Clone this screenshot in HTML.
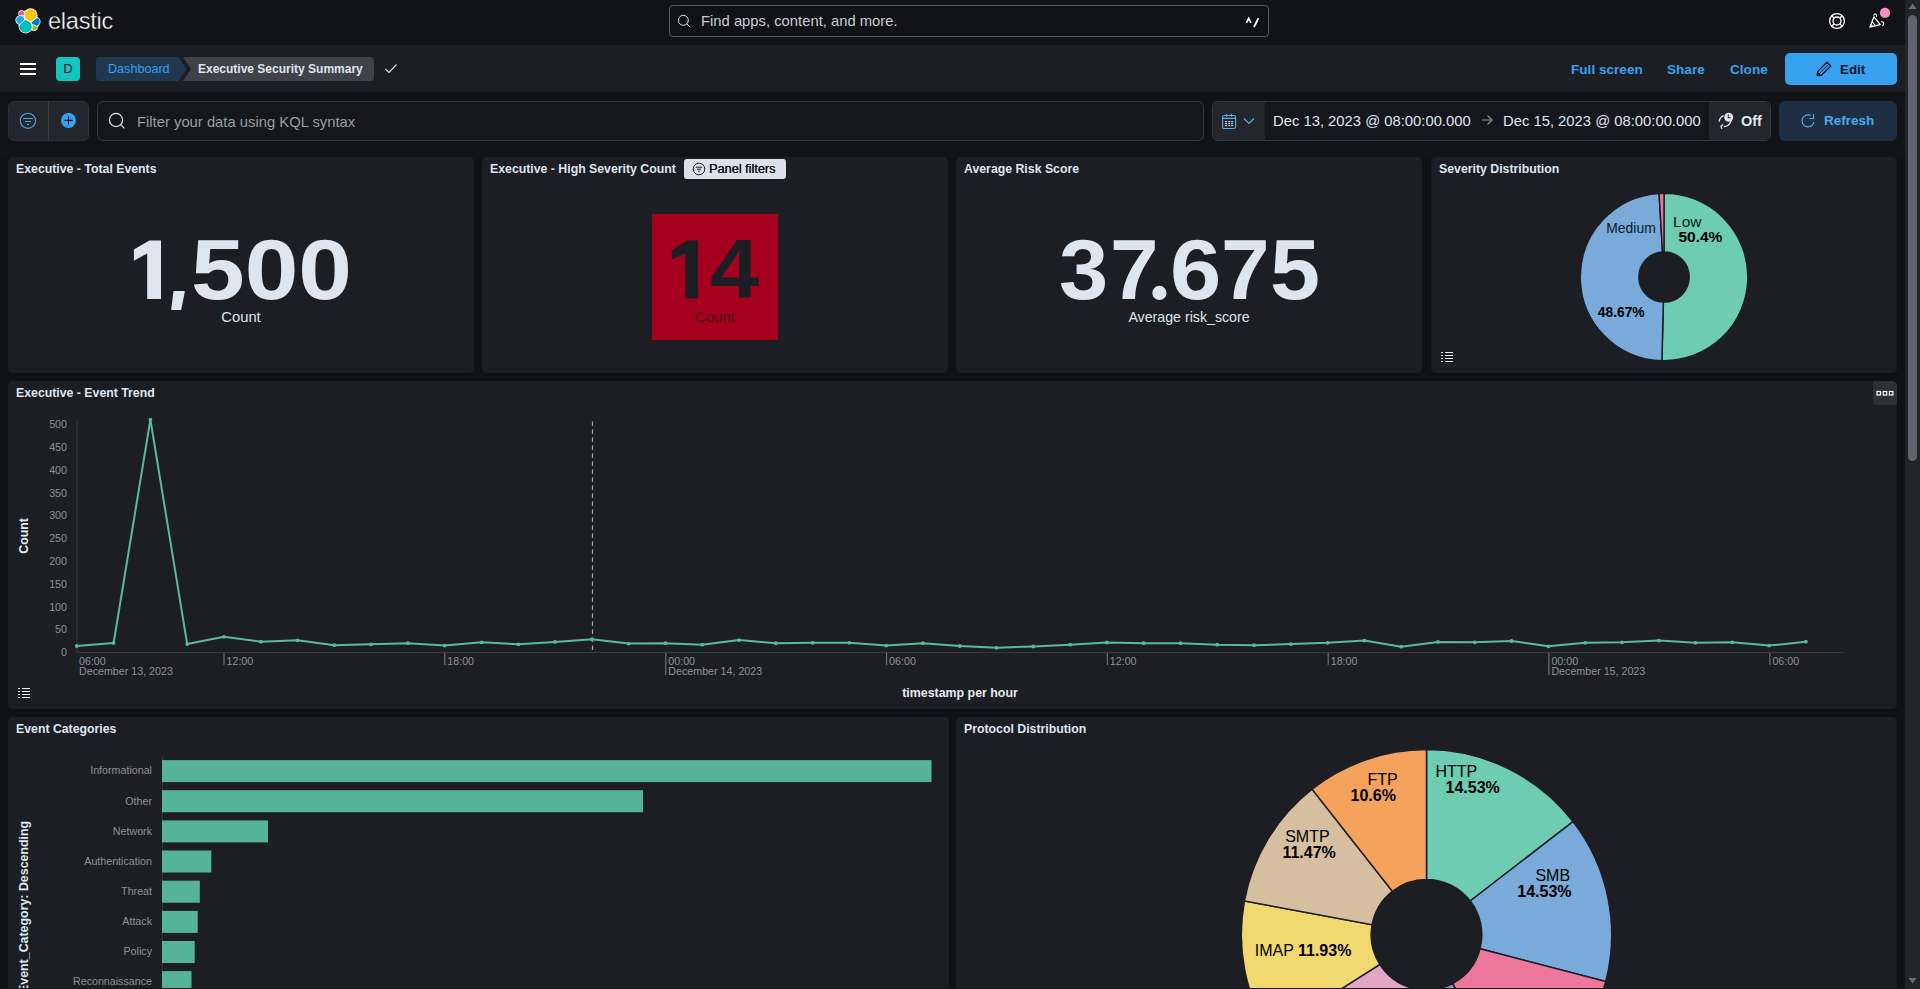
<!DOCTYPE html>
<html><head><meta charset="utf-8">
<style>
*{box-sizing:border-box;margin:0;padding:0}
html,body{width:1920px;height:989px;overflow:hidden;background:#101114;font-family:"Liberation Sans",sans-serif;color:#dfe5ef}
.abs{position:absolute;white-space:nowrap}
.t{position:absolute;white-space:nowrap;line-height:1}
.panel{position:absolute;background:#1d1e24;border-radius:5px}
.ttl{position:absolute;white-space:nowrap;line-height:1;font-size:12.3px;font-weight:bold;color:#dfe5ef}
</style></head><body>
<!-- ===== HEADER ===== -->
<div class="abs" style="left:0;top:0;width:1905px;height:45px;background:#121317"></div>
<svg class="abs" style="left:0;top:0" width="46" height="40" viewBox="0 0 46 40">
<defs>
<clipPath id="cy"><polygon points="24.3,4 44,4 44,12.5 31,22.3 24.4,18.4 24.3,16"/></clipPath>
<clipPath id="cp"><polygon points="10,4 24.3,4 24.3,15.6 10,15.6"/></clipPath>
<clipPath id="cl"><polygon points="10,15.6 24.3,15.6 24.4,18.4 24.9,19.6 18.6,26 10,26"/></clipPath>
<clipPath id="ct"><polygon points="18.6,26 24.9,19.6 24.4,18.4 31,22.3 32.2,24.4 32.2,36 12,36"/></clipPath>
<clipPath id="cb"><polygon points="31,22.3 44,12.5 44,28.4 32.2,24.6"/></clipPath>
<clipPath id="cg"><polygon points="32.2,24.6 44,28.4 44,36 32.2,36"/></clipPath>
</defs>
<g fill="#fff">
<circle cx="30.6" cy="15.2" r="6.9"/><circle cx="21.6" cy="13.6" r="3.3"/><circle cx="20.3" cy="20.1" r="4.9"/>
<circle cx="25.6" cy="26.4" r="7"/><circle cx="35.3" cy="21.7" r="5.2"/><circle cx="34.3" cy="27.5" r="3.4"/>
</g>
<circle cx="30.6" cy="15.2" r="6.2" fill="#fec514" clip-path="url(#cy)"/>
<circle cx="21.6" cy="13.6" r="2.6" fill="#f04e98" clip-path="url(#cp)"/>
<circle cx="20.3" cy="20.1" r="4.2" fill="#1ba9f5" clip-path="url(#cl)"/>
<circle cx="25.6" cy="26.4" r="6.3" fill="#00bfb3" clip-path="url(#ct)"/>
<circle cx="35.3" cy="21.7" r="4.5" fill="#0077cc" clip-path="url(#cb)"/>
<circle cx="34.4" cy="27.6" r="2.8" fill="#93c90e" clip-path="url(#cg)"/>
<path d="M24.3,10.5 V16 L24.4,18.4 L31,22.3 L38,17 M24.9,19.6 L18.6,26 M31,22.3 L32.2,24.4 V31 M32.2,24.6 L38.5,26.6 M19,15.6 H24.3" fill="none" stroke="#fff" stroke-width="0.7"/>
</svg>
<svg class="abs" style="left:40px;top:0" width="90" height="40" viewBox="40 0 90 40"><text x="48" y="29.4" font-family="Liberation Sans" font-size="23.6" letter-spacing="-0.25" fill="#ffffff" stroke="#121317" stroke-width="0.4">elastic</text></svg>
<div class="abs" style="left:669px;top:5px;width:600px;height:32px;border:1px solid #58595f;border-radius:4px;background:#111215"></div>
<svg class="abs" style="left:677px;top:14px" width="16" height="16" viewBox="0 0 16 16"><circle cx="6.3" cy="6.3" r="5" fill="none" stroke="#dfe5ef" stroke-width="1"/><path d="M9.8 9.8 L12.8 12.8" stroke="#dfe5ef" stroke-width="1"/></svg>
<div class="t" style="left:701px;top:14px;font-size:14.8px;color:#c8ccd3">Find apps, content, and more.</div>
<svg class="abs" style="left:1240px;top:10px" width="24" height="24" viewBox="0 0 24 24"><path d="M6.4 12.8 L8.7 8.4 L11 12.8" fill="none" stroke="#fff" stroke-width="1.7"/><path d="M14 17.2 L18.4 8.2" fill="none" stroke="#fff" stroke-width="1.9"/></svg>
<svg class="abs" style="left:1828px;top:12px" width="18" height="18" viewBox="0 0 18 18"><circle cx="9" cy="9" r="7.4" fill="none" stroke="#fff" stroke-width="1.3"/><circle cx="9" cy="9" r="4" fill="none" stroke="#fff" stroke-width="1.3"/><path d="M3.8 3.8L6.2 6.2M14.2 3.8L11.8 6.2M3.8 14.2L6.2 11.8M14.2 14.2L11.8 11.8" stroke="#fff" stroke-width="1.3"/></svg>
<svg class="abs" style="left:1860px;top:5px" width="32" height="28" viewBox="0 0 32 28"><path d="M9.8 22.2 L14 11.8 L20.2 19.6 Z" fill="none" stroke="#fff" stroke-width="1.25" stroke-linejoin="round"/><path d="M12.2 16.6 L15.4 20.7 M11 19.4 L12.6 21.4" stroke="#fff" stroke-width="1.1"/><path d="M13.6 10.6 Q14.3 8.3 16 9.2 Q17.2 10 16.3 11.8" fill="none" stroke="#fff" stroke-width="1.1"/><path d="M21 16.8 Q23.3 16.3 23.7 18.3 Q24 20.2 22.3 20.6" fill="none" stroke="#fff" stroke-width="1.1"/><circle cx="25" cy="7.9" r="5.1" fill="#f490bd"/></svg>
<!-- ===== NAV ===== -->
<div class="abs" style="left:0;top:45px;width:1905px;height:47px;background:#1d1e24"></div>
<div class="abs" style="left:20px;top:63px;width:16px;height:2px;background:#fff"></div>
<div class="abs" style="left:20px;top:68px;width:16px;height:2px;background:#fff"></div>
<div class="abs" style="left:20px;top:73px;width:16px;height:2px;background:#fff"></div>
<div class="abs" style="left:56px;top:57px;width:24px;height:24px;border-radius:4px;background:#16c5c0;color:#0b1628;font-size:13px;text-align:center;line-height:24px">D</div>
<svg class="abs" style="left:96px;top:57px" width="280" height="24" viewBox="0 0 280 24">
  <path d="M4 0 H82.5 L90.5 12 L82.5 24 H4 Q0 24 0 20 V4 Q0 0 4 0 Z" fill="#20374f"/>
  <path d="M87 0 H274 Q278 0 278 4 V20 Q278 24 274 24 H87 L95 12 Z" fill="#404249"/>
</svg>
<div class="t" style="left:108px;top:63px;font-size:12.6px;color:#36a2ef">Dashboard</div>
<div class="t" style="left:198px;top:63px;font-size:12px;font-weight:bold;color:#dfe5ef">Executive Security Summary</div>
<svg class="abs" style="left:384px;top:63px" width="14" height="12" viewBox="0 0 14 12"><path d="M1.5 6 L5 9.5 L12.5 1.5" fill="none" stroke="#dfe5ef" stroke-width="1.1"/></svg>
<div class="t" style="left:1571px;top:63px;font-size:13.6px;font-weight:bold;color:#36a2ef">Full screen</div>
<div class="t" style="left:1667px;top:63px;font-size:13.6px;font-weight:bold;color:#36a2ef">Share</div>
<div class="t" style="left:1730px;top:63px;font-size:13.6px;font-weight:bold;color:#36a2ef">Clone</div>
<div class="abs" style="left:1785px;top:53px;width:112px;height:32px;border-radius:5px;background:#36a2ef"></div>
<svg class="abs" style="left:1816px;top:61px" width="16" height="16" viewBox="0 0 16 16"><path d="M10.9 1.3 L14.8 5 L5.3 14.4 L1.3 14.7 L1.6 10.6 Z" fill="none" stroke="#0b1628" stroke-width="1.3" stroke-linejoin="round"/><path d="M12.8 3.2 L3.4 12.6" stroke="#0b1628" stroke-width="0.9"/><path d="M1.6 10.6 L5.3 14.4 L1.3 14.7 Z" fill="#0b1628" stroke="#0b1628" stroke-width="0.8" stroke-linejoin="round"/></svg>
<div class="t" style="left:1840px;top:63px;font-size:13.4px;font-weight:bold;color:#0b1628">Edit</div>
<!-- ===== FILTER BAR ===== -->
<div class="abs" style="left:0;top:92px;width:1905px;height:65px;background:#121317"></div>
<div class="abs" style="left:8px;top:101px;width:81px;height:40px;border-radius:6px;background:#25262d;border:1px solid #2f3038"></div>
<div class="abs" style="left:48px;top:101px;width:1px;height:40px;background:#3a3c45"></div>
<svg class="abs" style="left:19px;top:112px" width="18" height="18" viewBox="0 0 18 18"><circle cx="8.9" cy="8.8" r="7.6" fill="none" stroke="#4fa6e0" stroke-width="1.1"/><path d="M4.3 6.5 H13.9 M6 9.5 H12 M8.1 12.4 H9.8" stroke="#4fa6e0" stroke-width="1.1"/></svg>
<svg class="abs" style="left:60px;top:113px" width="17" height="16" viewBox="0 0 17 16"><circle cx="8.5" cy="7.4" r="7.5" fill="#36a2ef"/><path d="M8.5 3.2 V11.6 M4.3 7.4 H12.7" stroke="#0b1628" stroke-width="1.1"/></svg>
<div class="abs" style="left:97px;top:101px;width:1107px;height:40px;border-radius:6px;background:#16171c;border:1px solid #363841"></div>
<svg class="abs" style="left:108px;top:112px" width="18" height="18" viewBox="0 0 18 18"><circle cx="8" cy="8" r="6.6" fill="none" stroke="#dfe5ef" stroke-width="1.2"/><path d="M12.7 12.7 L16.3 16.3" stroke="#dfe5ef" stroke-width="1.2"/></svg>
<div class="t" style="left:137px;top:115px;font-size:14.8px;color:#9a9ea5">Filter your data using KQL syntax</div>
<div class="abs" style="left:1212px;top:101px;width:559px;height:40px;border-radius:6px;background:#16171c;border:1px solid #363841;overflow:hidden">
  <div class="abs" style="left:0;top:0;width:52px;height:40px;background:#25262d"></div>
  <div class="abs" style="left:496px;top:0;width:63px;height:40px;background:#25262d"></div>
</div>
<svg class="abs" style="left:1215px;top:108px" width="28" height="26" viewBox="0 0 28 26"><rect x="7.6" y="7.5" width="13" height="13" rx="1.6" fill="none" stroke="#5aaee8" stroke-width="1.1"/><path d="M7.6 10.4 H20.6 M11.4 6 V8.8 M16.4 6 V8.8" stroke="#5aaee8" stroke-width="1.1"/><rect x="10.0" y="13.0" width="2.1" height="1.2" fill="#aebfd6"/><rect x="13.1" y="13.0" width="2.1" height="1.2" fill="#aebfd6"/><rect x="16.1" y="13.0" width="2.1" height="1.2" fill="#aebfd6"/><rect x="10.0" y="15.0" width="2.1" height="1.2" fill="#aebfd6"/><rect x="13.1" y="15.0" width="2.1" height="1.2" fill="#aebfd6"/><rect x="16.1" y="15.0" width="2.1" height="1.2" fill="#aebfd6"/><rect x="10.0" y="17.0" width="2.1" height="1.2" fill="#aebfd6"/><rect x="13.1" y="17.0" width="2.1" height="1.2" fill="#aebfd6"/><rect x="16.1" y="17.0" width="2.1" height="1.2" fill="#aebfd6"/></svg>
<svg class="abs" style="left:1243px;top:117px" width="12" height="8" viewBox="0 0 12 8"><path d="M1 1.5 L6 6.5 L11 1.5" fill="none" stroke="#5aaee8" stroke-width="1.15"/></svg>
<div class="t" style="left:1273px;top:114px;font-size:14.8px;color:#dfe5ef">Dec 13, 2023 @ 08:00:00.000</div>
<svg class="abs" style="left:1481px;top:114px" width="12" height="12" viewBox="0 0 12 12"><path d="M1 6 H11 M6.5 1.5 L11 6 L6.5 10.5" fill="none" stroke="#8e9299" stroke-width="1.1"/></svg>
<div class="t" style="left:1503px;top:114px;font-size:14.8px;color:#dfe5ef">Dec 15, 2023 @ 08:00:00.000</div>
<svg class="abs" style="left:1710px;top:105px" width="30" height="33" viewBox="0 0 30 33"><path d="M9.2 16.8 Q9.4 12.6 13.6 10.6" fill="none" stroke="#dfe5ef" stroke-width="1.3"/><path d="M21 15.8 Q19.6 21.2 13.8 21.7" fill="none" stroke="#dfe5ef" stroke-width="1.3"/><path d="M13.2 19.6 L10.9 21.3 L11.8 23.8" fill="none" stroke="#dfe5ef" stroke-width="1.3"/><circle cx="18.7" cy="12.3" r="4.5" fill="#dfe5ef"/><path d="M18.3 9.6 V12.6 H20.6" fill="none" stroke="#25262d" stroke-width="1.1"/></svg>
<div class="t" style="left:1741px;top:114px;font-size:14.5px;font-weight:bold;color:#dfe5ef">Off</div>
<div class="abs" style="left:1779px;top:101px;width:118px;height:40px;border-radius:6px;background:#1e2f44"></div>
<svg class="abs" style="left:1795px;top:108px" width="26" height="26" viewBox="0 0 26 26"><path d="M18.9 14 A6 6 0 1 1 15.6 7.5" fill="none" stroke="#5aaee8" stroke-width="1.1"/><path d="M18.6 5.9 V10.5 H14.3" fill="none" stroke="#5aaee8" stroke-width="1.1"/></svg>
<div class="t" style="left:1824px;top:114px;font-size:13.5px;font-weight:bold;color:#4aa8ec">Refresh</div>
<!-- ===== ROW 1 ===== -->
<div class="panel" style="left:8px;top:157px;width:466px;height:216px"></div>
<div class="ttl" style="left:16px;top:163px">Executive - Total Events</div>
<svg class="abs" style="left:0;top:0" width="480" height="340" viewBox="0 0 480 340"><polygon points="149.3,240.5 161,240.5 161,299 147.2,299 147.2,253.4 133.9,260.7 133.9,249.4" fill="#dfe5ef"/><polygon points="173.5,291 184.9,291 181.2,310 171.1,310" fill="#dfe5ef"/></svg>
<div class="t" style="left:191px;top:226px;font-size:86px;font-weight:bold;color:#dfe5ef;transform:scaleX(1.122);transform-origin:0 0">500</div>
<div class="t" style="left:8px;width:466px;text-align:center;top:309.5px;font-size:14.8px;color:#dfe5ef">Count</div>

<div class="panel" style="left:482px;top:157px;width:466px;height:216px"></div>
<div class="ttl" style="left:490px;top:163px">Executive - High Severity Count</div>
<div class="abs" style="left:684px;top:159px;width:102px;height:20px;border-radius:3px;background:#dce1e9"></div>
<svg class="abs" style="left:692px;top:162px" width="14" height="14" viewBox="0 0 14 14"><circle cx="7" cy="7" r="5.8" fill="none" stroke="#1d1e24" stroke-width="1"/><path d="M3.8 5.2 H10.2 M5 7.2 H9 M6.2 9.2 H7.8" stroke="#1d1e24" stroke-width="1"/></svg>
<div class="t" style="left:709px;top:162.5px;font-size:12.7px;color:#111;text-shadow:0.35px 0 0 #111">Panel filters</div>
<div class="abs" style="left:652px;top:214px;width:126px;height:126px;background:#a6001f"></div>
<svg class="abs" style="left:650px;top:230px" width="60" height="80" viewBox="650 230 60 80"><polygon points="686.7,240.4 698,240.4 698,298.4 685.3,298.4 685.3,253.8 671.8,259.5 671.8,250.3" fill="#1d1e24"/></svg>
<div class="t" style="left:709.6px;top:227.4px;font-size:84px;font-weight:bold;color:#1d1e24;transform:scaleX(1.053);transform-origin:0 0">4</div>
<div class="t" style="left:652px;width:126px;text-align:center;top:309.5px;font-size:14.8px;color:#4a0c18">Count</div>

<div class="panel" style="left:956px;top:157px;width:466px;height:216px"></div>
<div class="ttl" style="left:964px;top:163px">Average Risk Score</div>
<div class="t" style="left:1059.0px;top:226.8px;font-size:85px;font-weight:bold;color:#dfe5ef;transform:scaleX(1.04);transform-origin:0 0">3</div>
<div class="t" style="left:1109.6px;top:226.8px;font-size:85px;font-weight:bold;color:#dfe5ef;transform:scaleX(1.027);transform-origin:0 0">7</div>
<div class="t" style="left:1169.5px;top:226.8px;font-size:85px;font-weight:bold;color:#dfe5ef;transform:scaleX(1.085);transform-origin:0 0">6</div>
<div class="t" style="left:1221.3px;top:226.8px;font-size:85px;font-weight:bold;color:#dfe5ef;transform:scaleX(1.029);transform-origin:0 0">7</div>
<div class="t" style="left:1269.6px;top:226.8px;font-size:85px;font-weight:bold;color:#dfe5ef;transform:scaleX(1.06);transform-origin:0 0">5</div>
<svg class="abs" style="left:1150px;top:284px" width="20" height="18" viewBox="1150 284 20 18"><circle cx="1159.4" cy="292.9" r="7.1" fill="#dfe5ef"/></svg>

<div class="t" style="left:956px;width:466px;text-align:center;top:310px;font-size:14.2px;color:#dfe5ef">Average risk_score</div>

<div class="panel" style="left:1431px;top:157px;width:466px;height:216px"></div>
<div class="ttl" style="left:1439px;top:163px">Severity Distribution</div>
<svg class="abs" style="left:1440px;top:350px" width="14" height="14" viewBox="0 0 14 14"><path d="M1 2.5h2M1 5.5h2M1 8.5h2M1 11.5h2M5 2.5h8M5 5.5h8M5 8.5h8M5 11.5h8" stroke="#eef0f4" stroke-width="1.15"/></svg>
<!-- ===== ROW 2 ===== -->
<div class="panel" style="left:8px;top:381px;width:1889px;height:328px"></div>
<div class="ttl" style="left:16px;top:387px">Executive - Event Trend</div>
<div class="abs" style="left:1873px;top:381px;width:24px;height:24px;border-radius:2px 5px 2px 4px;background:#2f3036"></div>
<svg class="abs" style="left:1876px;top:389.5px" width="18" height="8" viewBox="0 0 18 8"><rect x="1" y="1.5" width="3.5" height="3.5" fill="none" stroke="#fff" stroke-width="1.2"/><rect x="7.2" y="1.5" width="3.5" height="3.5" fill="none" stroke="#fff" stroke-width="1.2"/><rect x="13.4" y="1.5" width="3.5" height="3.5" fill="none" stroke="#fff" stroke-width="1.2"/></svg>
<svg class="abs" style="left:0;top:0" width="1905" height="989" viewBox="0 0 1905 989" font-family="Liberation Sans">
<path d="M77,420 V652.5 H1844" fill="none" stroke="#343741" stroke-width="1"/>
<path d="M592.5,421.5 V653" fill="none" stroke="#a3a9b3" stroke-width="1.2" stroke-dasharray="4.5,3.5"/>
<polyline points="76.8,646.0 113.6,643.0 150.4,419.7 187.2,644.1 224.0,636.8 260.8,641.7 297.5,640.3 334.3,645.2 371.1,644.3 407.9,643.2 444.7,645.6 481.5,642.3 518.3,644.3 555.1,641.9 591.9,639.3 628.6,643.6 665.4,643.2 702.2,644.7 739.0,640.1 775.8,643.2 812.6,642.8 849.4,642.8 886.2,645.6 923.0,643.2 959.8,646.0 996.5,647.8 1033.3,646.5 1070.1,644.7 1106.9,642.5 1143.7,643.2 1180.5,643.2 1217.3,644.7 1254.1,645.2 1290.9,644.1 1327.7,642.8 1364.4,640.6 1401.2,646.7 1438.0,641.9 1474.8,642.3 1511.6,641.0 1548.4,646.3 1585.2,642.8 1622.0,642.3 1658.8,640.6 1695.6,642.8 1732.3,642.3 1769.1,645.6 1805.9,641.7" fill="none" stroke="#5aba9c" stroke-width="2" stroke-linejoin="round"/>
<circle cx="76.8" cy="646.0" r="1.9" fill="#5aba9c"/>
<circle cx="113.6" cy="643.0" r="1.9" fill="#5aba9c"/>
<circle cx="150.4" cy="419.7" r="1.9" fill="#5aba9c"/>
<circle cx="187.2" cy="644.1" r="1.9" fill="#5aba9c"/>
<circle cx="224.0" cy="636.8" r="1.9" fill="#5aba9c"/>
<circle cx="260.8" cy="641.7" r="1.9" fill="#5aba9c"/>
<circle cx="297.5" cy="640.3" r="1.9" fill="#5aba9c"/>
<circle cx="334.3" cy="645.2" r="1.9" fill="#5aba9c"/>
<circle cx="371.1" cy="644.3" r="1.9" fill="#5aba9c"/>
<circle cx="407.9" cy="643.2" r="1.9" fill="#5aba9c"/>
<circle cx="444.7" cy="645.6" r="1.9" fill="#5aba9c"/>
<circle cx="481.5" cy="642.3" r="1.9" fill="#5aba9c"/>
<circle cx="518.3" cy="644.3" r="1.9" fill="#5aba9c"/>
<circle cx="555.1" cy="641.9" r="1.9" fill="#5aba9c"/>
<circle cx="591.9" cy="639.3" r="1.9" fill="#5aba9c"/>
<circle cx="628.6" cy="643.6" r="1.9" fill="#5aba9c"/>
<circle cx="665.4" cy="643.2" r="1.9" fill="#5aba9c"/>
<circle cx="702.2" cy="644.7" r="1.9" fill="#5aba9c"/>
<circle cx="739.0" cy="640.1" r="1.9" fill="#5aba9c"/>
<circle cx="775.8" cy="643.2" r="1.9" fill="#5aba9c"/>
<circle cx="812.6" cy="642.8" r="1.9" fill="#5aba9c"/>
<circle cx="849.4" cy="642.8" r="1.9" fill="#5aba9c"/>
<circle cx="886.2" cy="645.6" r="1.9" fill="#5aba9c"/>
<circle cx="923.0" cy="643.2" r="1.9" fill="#5aba9c"/>
<circle cx="959.8" cy="646.0" r="1.9" fill="#5aba9c"/>
<circle cx="996.5" cy="647.8" r="1.9" fill="#5aba9c"/>
<circle cx="1033.3" cy="646.5" r="1.9" fill="#5aba9c"/>
<circle cx="1070.1" cy="644.7" r="1.9" fill="#5aba9c"/>
<circle cx="1106.9" cy="642.5" r="1.9" fill="#5aba9c"/>
<circle cx="1143.7" cy="643.2" r="1.9" fill="#5aba9c"/>
<circle cx="1180.5" cy="643.2" r="1.9" fill="#5aba9c"/>
<circle cx="1217.3" cy="644.7" r="1.9" fill="#5aba9c"/>
<circle cx="1254.1" cy="645.2" r="1.9" fill="#5aba9c"/>
<circle cx="1290.9" cy="644.1" r="1.9" fill="#5aba9c"/>
<circle cx="1327.7" cy="642.8" r="1.9" fill="#5aba9c"/>
<circle cx="1364.4" cy="640.6" r="1.9" fill="#5aba9c"/>
<circle cx="1401.2" cy="646.7" r="1.9" fill="#5aba9c"/>
<circle cx="1438.0" cy="641.9" r="1.9" fill="#5aba9c"/>
<circle cx="1474.8" cy="642.3" r="1.9" fill="#5aba9c"/>
<circle cx="1511.6" cy="641.0" r="1.9" fill="#5aba9c"/>
<circle cx="1548.4" cy="646.3" r="1.9" fill="#5aba9c"/>
<circle cx="1585.2" cy="642.8" r="1.9" fill="#5aba9c"/>
<circle cx="1622.0" cy="642.3" r="1.9" fill="#5aba9c"/>
<circle cx="1658.8" cy="640.6" r="1.9" fill="#5aba9c"/>
<circle cx="1695.6" cy="642.8" r="1.9" fill="#5aba9c"/>
<circle cx="1732.3" cy="642.3" r="1.9" fill="#5aba9c"/>
<circle cx="1769.1" cy="645.6" r="1.9" fill="#5aba9c"/>
<circle cx="1805.9" cy="641.7" r="1.9" fill="#5aba9c"/>
<text x="67" y="656.2" text-anchor="end" font-size="10.7" fill="#8e9196">0</text>
<text x="67" y="633.4" text-anchor="end" font-size="10.7" fill="#8e9196">50</text>
<text x="67" y="610.6" text-anchor="end" font-size="10.7" fill="#8e9196">100</text>
<text x="67" y="587.8" text-anchor="end" font-size="10.7" fill="#8e9196">150</text>
<text x="67" y="565.0" text-anchor="end" font-size="10.7" fill="#8e9196">200</text>
<text x="67" y="542.1" text-anchor="end" font-size="10.7" fill="#8e9196">250</text>
<text x="67" y="519.3" text-anchor="end" font-size="10.7" fill="#8e9196">300</text>
<text x="67" y="496.5" text-anchor="end" font-size="10.7" fill="#8e9196">350</text>
<text x="67" y="473.7" text-anchor="end" font-size="10.7" fill="#8e9196">400</text>
<text x="67" y="450.9" text-anchor="end" font-size="10.7" fill="#8e9196">450</text>
<text x="67" y="428.1" text-anchor="end" font-size="10.7" fill="#8e9196">500</text>
<path d="M224.0,653 V665" stroke="#7b7f87" stroke-width="1"/>
<text x="226.5" y="665" font-size="10.7" fill="#8e9196">12:00</text>
<path d="M444.8,653 V665" stroke="#7b7f87" stroke-width="1"/>
<text x="447.3" y="665" font-size="10.7" fill="#8e9196">18:00</text>
<path d="M665.8,653 V675" stroke="#7b7f87" stroke-width="1"/>
<text x="668.3" y="665" font-size="10.7" fill="#8e9196">00:00</text>
<text x="668.3" y="675" font-size="10.7" fill="#8e9196">December 14, 2023</text>
<path d="M886.6,653 V665" stroke="#7b7f87" stroke-width="1"/>
<text x="889.1" y="665" font-size="10.7" fill="#8e9196">06:00</text>
<path d="M1107.3,653 V665" stroke="#7b7f87" stroke-width="1"/>
<text x="1109.8" y="665" font-size="10.7" fill="#8e9196">12:00</text>
<path d="M1328.2,653 V665" stroke="#7b7f87" stroke-width="1"/>
<text x="1330.7" y="665" font-size="10.7" fill="#8e9196">18:00</text>
<path d="M1548.9,653 V675" stroke="#7b7f87" stroke-width="1"/>
<text x="1551.4" y="665" font-size="10.7" fill="#8e9196">00:00</text>
<text x="1551.4" y="675" font-size="10.7" fill="#8e9196">December 15, 2023</text>
<path d="M1769.9,653 V665" stroke="#7b7f87" stroke-width="1"/>
<text x="1772.4" y="665" font-size="10.7" fill="#8e9196">06:00</text>
<text x="79" y="665" font-size="10.7" fill="#8e9196">06:00</text>
<text x="79" y="675" font-size="10.7" fill="#8e9196">December 13, 2023</text>
<text x="960" y="697" text-anchor="middle" font-size="12.4" font-weight="bold" fill="#e6eaf0">timestamp per hour</text>
<text transform="translate(28,536) rotate(-90)" text-anchor="middle" font-size="12.3" font-weight="bold" fill="#e6eaf0">Count</text>
</svg>
<svg class="abs" style="left:17px;top:686px" width="14" height="14" viewBox="0 0 14 14"><path d="M1 2.5h2M1 5.5h2M1 8.5h2M1 11.5h2M5 2.5h8M5 5.5h8M5 8.5h8M5 11.5h8" stroke="#eef0f4" stroke-width="1.15"/></svg>
<!-- ===== ROW 3 ===== -->
<div class="panel" style="left:8px;top:717px;width:941px;height:290px"></div>
<div class="ttl" style="left:16px;top:723px">Event Categories</div>
<div class="panel" style="left:956px;top:717px;width:941px;height:290px"></div>
<div class="ttl" style="left:964px;top:723px">Protocol Distribution</div>
<svg class="abs" style="left:0;top:0" width="1905" height="989" viewBox="0 0 1905 989" font-family="Liberation Sans">
<path d="M162.5,757 V989" stroke="#343741" stroke-width="1"/>
<rect x="162" y="760.1" width="769.5" height="22" fill="#54b399"/>
<text x="152" y="774.4" text-anchor="end" font-size="10.7" fill="#8e9196">Informational</text>
<rect x="162" y="790.2" width="481.0" height="22" fill="#54b399"/>
<text x="152" y="804.5" text-anchor="end" font-size="10.7" fill="#8e9196">Other</text>
<rect x="162" y="820.4" width="106.0" height="22" fill="#54b399"/>
<text x="152" y="834.7" text-anchor="end" font-size="10.7" fill="#8e9196">Network</text>
<rect x="162" y="850.5" width="49.3" height="22" fill="#54b399"/>
<text x="152" y="864.8" text-anchor="end" font-size="10.7" fill="#8e9196">Authentication</text>
<rect x="162" y="880.7" width="37.8" height="22" fill="#54b399"/>
<text x="152" y="895.0" text-anchor="end" font-size="10.7" fill="#8e9196">Threat</text>
<rect x="162" y="910.9" width="35.7" height="22" fill="#54b399"/>
<text x="152" y="925.1" text-anchor="end" font-size="10.7" fill="#8e9196">Attack</text>
<rect x="162" y="941.0" width="32.7" height="22" fill="#54b399"/>
<text x="152" y="955.3" text-anchor="end" font-size="10.7" fill="#8e9196">Policy</text>
<rect x="162" y="971.1" width="29.5" height="22" fill="#54b399"/>
<text x="152" y="985.4" text-anchor="end" font-size="10.7" fill="#8e9196">Reconnaissance</text>
<text transform="translate(28,989) rotate(-90)" text-anchor="start" font-size="12.4" font-weight="bold" fill="#dfe5ef" x="-4">Event_Category: Descending</text>
<clipPath id="pc"><rect x="956" y="717" width="941" height="272"/></clipPath>
<g clip-path="url(#pc)">
<path d="M1426.50,749.60 A185.2,185.2 0 0 1 1573.05,821.57 L1470.26,900.99 A55.3,55.3 0 0 0 1426.50,879.50 Z" fill="#6dccb1" stroke="#1d1e24" stroke-width="1.5"/>
<path d="M1573.05,821.57 A185.2,185.2 0 0 1 1605.71,981.53 L1480.01,948.75 A55.3,55.3 0 0 0 1470.26,900.99 Z" fill="#79aad9" stroke="#1d1e24" stroke-width="1.5"/>
<path d="M1605.71,981.53 A185.2,185.2 0 0 1 1514.08,1097.98 L1452.65,983.53 A55.3,55.3 0 0 0 1480.01,948.75 Z" fill="#ee789d" stroke="#1d1e24" stroke-width="1.5"/>
<path d="M1514.08,1097.98 A185.2,185.2 0 0 1 1377.52,1113.41 L1411.87,988.13 A55.3,55.3 0 0 0 1452.65,983.53 Z" fill="#a987d1" stroke="#1d1e24" stroke-width="1.5"/>
<path d="M1377.52,1113.41 A185.2,185.2 0 0 1 1270.13,1034.04 L1379.81,964.43 A55.3,55.3 0 0 0 1411.87,988.13 Z" fill="#e4a6c7" stroke="#1d1e24" stroke-width="1.5"/>
<path d="M1270.13,1034.04 A185.2,185.2 0 0 1 1244.43,900.90 L1372.13,924.68 A55.3,55.3 0 0 0 1379.81,964.43 Z" fill="#f1d86f" stroke="#1d1e24" stroke-width="1.5"/>
<path d="M1244.43,900.90 A185.2,185.2 0 0 1 1312.07,789.18 L1392.33,891.32 A55.3,55.3 0 0 0 1372.13,924.68 Z" fill="#d6bf9f" stroke="#1d1e24" stroke-width="1.5"/>
<path d="M1312.07,789.18 A185.2,185.2 0 0 1 1426.50,749.60 L1426.50,879.50 A55.3,55.3 0 0 0 1392.33,891.32 Z" fill="#f5a35c" stroke="#1d1e24" stroke-width="1.5"/>
<text x="1435.4" y="776.75" font-size="16" fill="#000">HTTP</text>
<text x="1445.5" y="793" font-size="16" font-weight="bold" fill="#000">14.53%</text>
<text x="1367.4" y="784.8" font-size="16" fill="#000">FTP</text>
<text x="1350.5" y="800.9" font-size="16" font-weight="bold" fill="#000">10.6%</text>
<text x="1285.2" y="841.8" font-size="16" fill="#000">SMTP</text>
<text x="1282.4" y="857.8" font-size="16" font-weight="bold" fill="#000">11.47%</text>
<text x="1535.4" y="880.9" font-size="16" fill="#000">SMB</text>
<text x="1517.3" y="896.8" font-size="16" font-weight="bold" fill="#000">14.53%</text>
<text x="1254.7" y="955.6" font-size="16" fill="#000">IMAP</text>
<text x="1298" y="955.6" font-size="16" font-weight="bold" fill="#000">11.93%</text>
</g>
<path d="M1664.00,193.25 A83.75,83.75 0 1 1 1661.90,360.72 L1663.37,302.09 A25.1,25.1 0 1 0 1664.00,251.90 Z" fill="#6dccb1" stroke="#1d1e24" stroke-width="1.5"/>
<path d="M1661.90,360.72 A83.75,83.75 0 0 1 1659.11,193.39 L1662.53,251.94 A25.1,25.1 0 0 0 1663.37,302.09 Z" fill="#79aad9" stroke="#1d1e24" stroke-width="1.5"/>
<path d="M1659.11,193.39 A83.75,83.75 0 0 1 1664.00,193.25 L1664.00,251.90 A25.1,25.1 0 0 0 1662.53,251.94 Z" fill="#ee789d" stroke="#1d1e24" stroke-width="1.5"/><text x="1606.3" y="232.9" font-size="13.9" fill="#0a1a2a">Medium</text>
<text x="1673.1" y="227" font-size="15.5" fill="#06261d">Low</text>
<text x="1678.4" y="241.8" font-size="15.5" font-weight="bold" fill="#000">50.4%</text>
<text x="1597.8" y="317" font-size="13.8" font-weight="bold" fill="#000">48.67%</text>
</svg>
<div class="abs" style="left:0;top:988px;width:1905px;height:1px;background:#17171f"></div>
<!-- scrollbar -->
<div class="abs" style="left:1905px;top:0;width:15px;height:989px;background:#232428"></div>
<div class="abs" style="left:1908px;top:15px;width:9px;height:446px;border-radius:5px;background:#62646d"></div>
<svg class="abs" style="left:1907px;top:2px" width="11" height="8" viewBox="0 0 11 8"><path d="M1.5 7 L5.5 1.5 L9.5 7 Z" fill="#6b6d75"/></svg>
<svg class="abs" style="left:1907px;top:977px" width="11" height="8" viewBox="0 0 11 8"><path d="M1.5 1 L5.5 6.5 L9.5 1 Z" fill="#6b6d75"/></svg>
</body></html>
